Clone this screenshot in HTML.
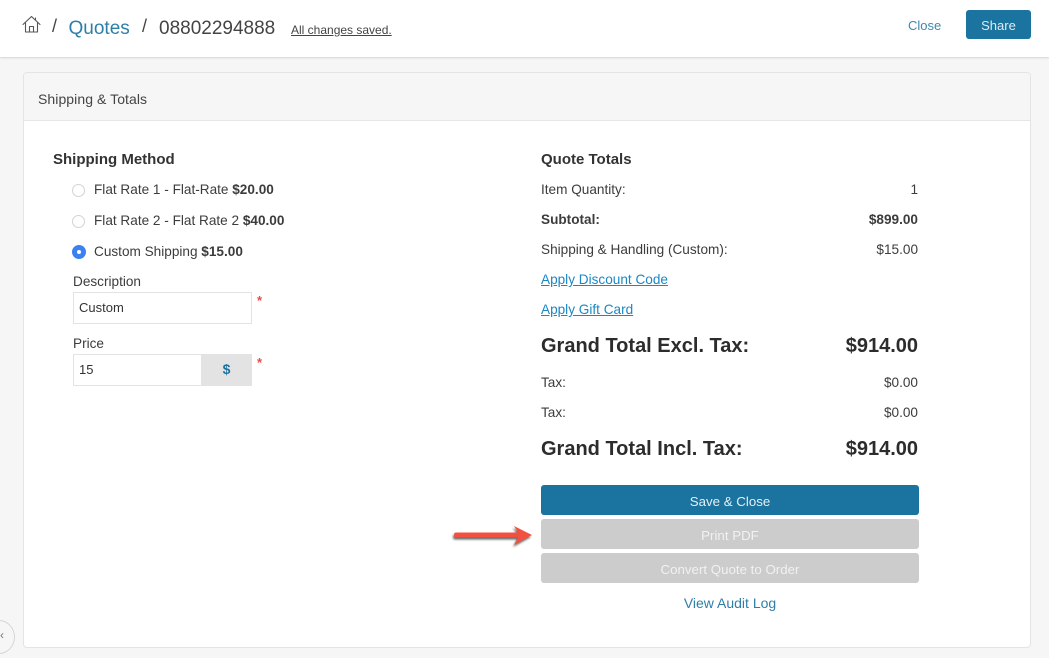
<!DOCTYPE html>
<html lang="en">
<head>
<meta charset="utf-8">
<title>Shipping &amp; Totals</title>
<style>
html,body{margin:0;padding:0}
body{position:relative;width:1049px;height:658px;overflow:hidden;background:#f6f6f6;font-family:"Liberation Sans",sans-serif;color:#333}
.a{position:absolute;white-space:nowrap}
#top{position:absolute;left:0;top:0;width:1049px;height:57px;background:#fff;box-shadow:0 1px 2px rgba(0,0,0,.14)}
#card{position:absolute;left:23px;top:72px;width:1006px;height:574px;background:#fff;border:1px solid #e4e4e4;border-radius:4px;overflow:hidden}
#cardh{position:absolute;left:0;top:0;width:100%;height:47px;background:#f6f6f6;border-bottom:1px solid #e6e6e6}
.l{font-size:13.6px;line-height:20px;color:#3c3c3c}
.r{font-size:13.6px;line-height:20px;color:#3c3c3c;text-align:right;left:700px;width:218px}
.link{font-size:13.6px;line-height:20px;color:#1b87c4;text-decoration:underline}
.g{font-size:20px;line-height:26px;font-weight:bold;color:#2c2c2c}
.radio{position:absolute;left:72px;width:11px;height:11px;border:1.5px solid #d3d3d3;border-radius:50%;background:#fff}
.input{position:absolute;left:73px;width:177px;height:30px;border:1px solid #e3e3e3;background:#fff}
.btn{position:absolute;left:541px;width:378px;height:30px;border-radius:3px;text-align:center;font-size:13.3px;line-height:34px}
.star{color:#ea4a4a;font-size:13px;line-height:12px;font-weight:bold}
</style>
</head>
<body>
<div id="top"></div>
<svg class="a" style="left:22px;top:15px" width="19" height="19" viewBox="0 0 19 19" fill="none" stroke="#555" stroke-width="1.1" stroke-linejoin="round" stroke-linecap="round"><path d="M1 9.5 9.5 1.5 18 9.5"/><path d="M3.5 8V17H15.5V8"/><path d="M7.5 17V11.5H11.5V17"/><path d="M13.5 3V5"/></svg>
<div class="a" style="left:52px;top:15px;font-size:18px;line-height:22px;color:#444">/</div>
<div class="a" style="left:68.5px;top:17px;font-size:19px;line-height:23px;color:#2e7fa8">Quotes</div>
<div class="a" style="left:142px;top:15px;font-size:18px;line-height:22px;color:#444">/</div>
<div class="a" style="left:159px;top:17px;font-size:19px;line-height:23px;color:#444">08802294888</div>
<div class="a" style="left:291px;top:22px;font-size:12px;line-height:16px;color:#444;text-decoration:underline">All changes saved.</div>
<div class="a" style="left:908px;top:17px;font-size:13px;line-height:18px;color:#3f88ae">Close</div>
<div class="a" style="left:966px;top:10px;width:65px;height:29px;background:#1b74a0;border-radius:3px;color:#dcecf3;font-size:13px;line-height:31px;text-align:center">Share</div>

<div id="card"><div id="cardh"></div></div>
<div class="a" style="left:38px;top:90px;font-size:14px;line-height:18px;color:#444;letter-spacing:.07px">Shipping &amp; Totals</div>

<div class="a" style="left:53px;top:151px;font-size:15px;line-height:18px;font-weight:bold;color:#333">Shipping Method</div>
<div class="radio" style="top:184px"></div>
<div class="a l" style="left:94px;top:180px">Flat Rate 1 - Flat-Rate <b>$20.00</b></div>
<div class="radio" style="top:215px"></div>
<div class="a l" style="left:94px;top:211px">Flat Rate 2 - Flat Rate 2 <b>$40.00</b></div>
<div class="a" style="left:72px;top:245px;width:14px;height:14px;border-radius:50%;background:#3b82f0"></div>
<div class="a" style="left:77px;top:250px;width:4px;height:4px;border-radius:50%;background:#fff"></div>
<div class="a l" style="left:94px;top:242px">Custom Shipping <b>$15.00</b></div>

<div class="a l" style="left:73px;top:272px">Description</div>
<div class="input" style="top:292px"></div>
<div class="a" style="left:79px;top:299px;font-size:13px;line-height:17px;color:#333">Custom</div>
<div class="a star" style="left:257px;top:295px">*</div>

<div class="a l" style="left:73px;top:334px">Price</div>
<div class="input" style="top:354px"></div>
<div class="a" style="left:201px;top:354px;width:51px;height:32px;background:#e3e3e3;text-align:center;font-size:14px;font-weight:bold;line-height:31px;color:#1b74a0">$</div>
<div class="a" style="left:79px;top:361px;font-size:13px;line-height:17px;color:#333">15</div>
<div class="a star" style="left:257px;top:357px">*</div>

<div class="a" style="left:541px;top:151px;font-size:15px;line-height:18px;font-weight:bold;color:#333">Quote Totals</div>
<div class="a l" style="left:541px;top:180px">Item Quantity:</div>
<div class="a r" style="top:180px">1</div>
<div class="a l" style="left:541px;top:210px;font-weight:bold">Subtotal:</div>
<div class="a r" style="top:210px;font-weight:bold">$899.00</div>
<div class="a l" style="left:541px;top:240px">Shipping &amp; Handling (Custom):</div>
<div class="a r" style="top:240px">$15.00</div>
<div class="a link" style="left:541px;top:270px">Apply Discount Code</div>
<div class="a link" style="left:541px;top:300px">Apply Gift Card</div>
<div class="a g" style="left:541px;top:333px">Grand Total Excl. Tax:</div>
<div class="a g" style="left:700px;width:218px;text-align:right;top:333px">$914.00</div>
<div class="a l" style="left:541px;top:373px">Tax:</div>
<div class="a r" style="top:373px">$0.00</div>
<div class="a l" style="left:541px;top:403px">Tax:</div>
<div class="a r" style="top:403px">$0.00</div>
<div class="a g" style="left:541px;top:436px">Grand Total Incl. Tax:</div>
<div class="a g" style="left:700px;width:218px;text-align:right;top:436px">$914.00</div>

<div class="btn" style="top:485px;background:#1b74a0;color:#e3eff5">Save &amp; Close</div>
<div class="btn" style="top:519px;background:#cccccc;color:#f1f1f1">Print PDF</div>
<div class="btn" style="top:553px;background:#cccccc;color:#f1f1f1">Convert Quote to Order</div>
<div class="a" style="left:541px;width:378px;top:594px;text-align:center;font-size:14px;line-height:18px;color:#2e7fa8">View Audit Log</div>

<svg class="a" style="left:450px;top:522px;filter:drop-shadow(-1px 2px 1px rgba(0,0,0,.6))" width="86" height="30" viewBox="0 0 86 30">
<path d="M6 10.5H68L64 4 82 13 64 23 68 15.5H6Q4 15.5 4 13T6 10.5Z" fill="#f4503f"/>
</svg>

<div class="a" style="left:-17px;top:620px;width:30px;height:32px;border:1.5px solid #d6d6d6;border-radius:50%;background:#f6f6f6"></div>
<div class="a" style="left:0;top:628px;font-size:12px;line-height:14px;color:#777">‹</div>
</body>
</html>
